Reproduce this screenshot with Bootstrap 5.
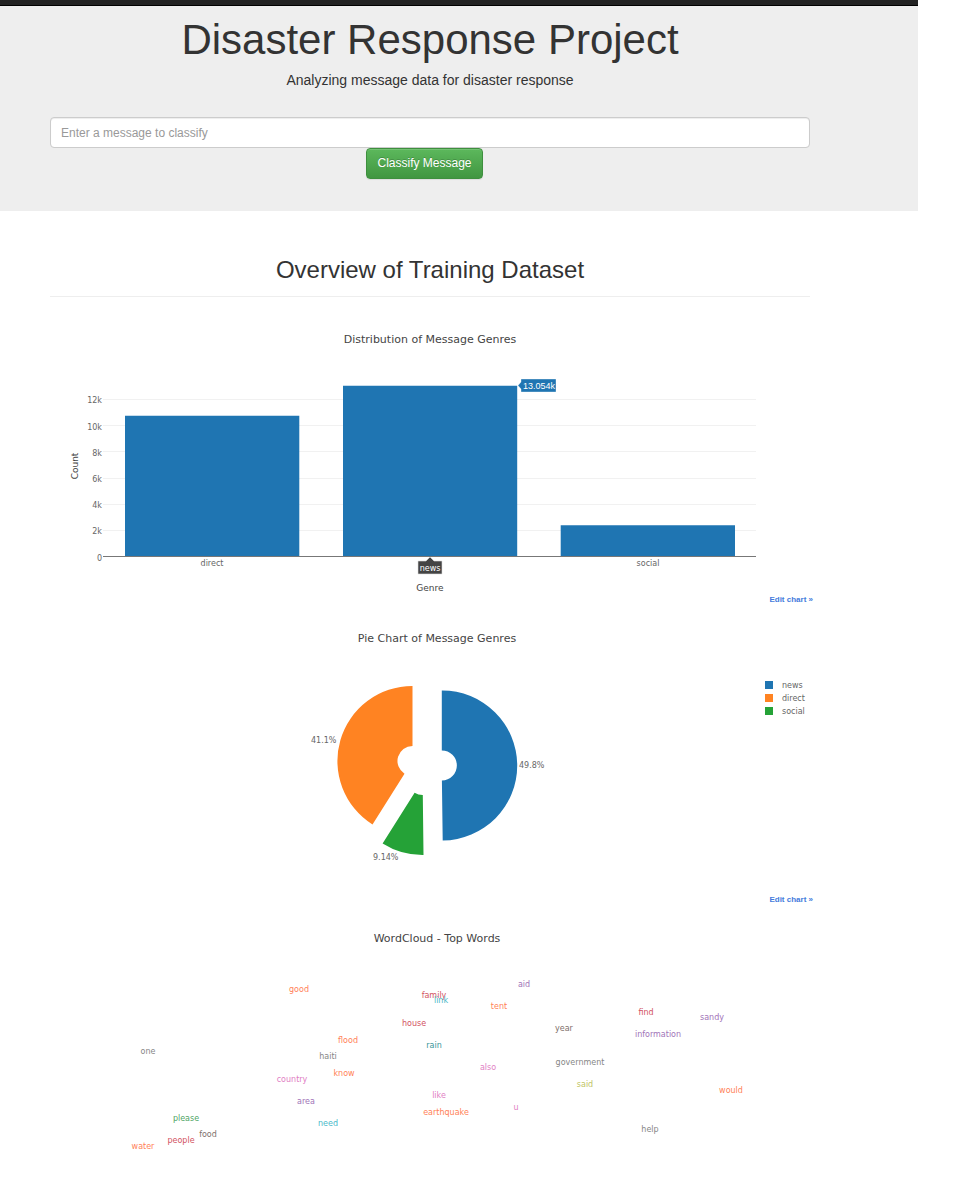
<!DOCTYPE html>
<html lang="en">
<head>
<meta charset="utf-8">
<meta name="viewport" content="width=device-width, initial-scale=1">
<title>Disasters</title>
<link rel="stylesheet" href="https://cdn.jsdelivr.net/npm/bootstrap@5.3.0/dist/css/bootstrap.min.css">
<style>
  body { font-family: "Liberation Sans", Arial, sans-serif; font-size: 12px; color: #333; background: #fff; padding-right: 35px; overflow-x: hidden; }
  .topbar { height: 6px; background: #222; border-bottom: 1px solid #000; }
  .inset { padding-left: 50px; padding-right: 108px; }
  .hero { background: #eee; padding-top: 11px; padding-bottom: 32px; }
  .hero h1 { font-size: 42px; line-height: 46px; font-weight: 400; margin: 0 0 7px; }
  .hero p { font-size: 14px; line-height: 20px; margin: 0 0 27px; }
  .msg-input { height: 31px; font-size: 12px; padding: 5px 10px; border: 1px solid #ccc; border-radius: 4px; box-shadow: inset 0 1px 1px rgba(0,0,0,.075); }
  .msg-input::placeholder { color: #999; }
  .btn-classify { height: 31px; font-size: 12px; line-height: 17px; padding: 5px 10px; margin-right: 11px; color: #fff; border: 1px solid #3e8f3e; border-radius: 4px; background: linear-gradient(#5cb85c, #419641); text-shadow: 0 -1px 0 rgba(0,0,0,.2); box-shadow: inset 0 1px 0 rgba(255,255,255,.15), 0 1px 1px rgba(0,0,0,.075); }
  .btn-classify:hover { color: #fff; background: #419641; }
  .section-title { margin-top: 44px; padding-bottom: 11px; border-bottom: 1px solid #eee; margin-bottom: 9px; }
  .section-title h2 { font-size: 24px; line-height: 30px; font-weight: 400; margin: 0; }
  .plot svg { display: block; width: 100%; height: auto; overflow: visible; font-family: "DejaVu Sans", Verdana, sans-serif; font-size: 8px; fill: #666; }
  .plot .plot-title { font-size: 11px; fill: #444; }
  .plot .axis-title { font-size: 9px; fill: #444; }
  .plot .tip { fill: #fff; }
  .plot .tip-num { fill: #fff; font-family: "Liberation Sans", Arial, sans-serif; font-size: 9px; }
  .edit-link { font-size: 8px; line-height: 12px; font-weight: 700; margin-right: -3px; }
  .edit-link a { color: #447bdc; text-decoration: none; }
  .c-blue { fill: #1f75b2; } .c-orange { fill: #ff8322; } .c-green { fill: #25a237; }
  .w-orange { fill: #ff7f57; } .w-red { fill: #d25362; } .w-purple { fill: #a173b8; } .w-pink { fill: #df80c4; }
  .w-gray { fill: #868686; } .w-brown { fill: #80706c; } .w-cyan { fill: #4ab9c9; } .w-green { fill: #4fa565; }
  .w-teal { fill: #389699; } .w-olive { fill: #c0c464; }
</style>
</head>
<body>
<nav class="topbar" aria-label="Main"></nav>

<header class="hero inset text-center">
  <h1>Disaster Response Project</h1>
  <p>Analyzing message data for disaster response</p>
  <form action="#" method="get">
    <input class="form-control msg-input" type="text" name="query" aria-label="Enter a message to classify" placeholder="Enter a message to classify">
    <div class="d-flex justify-content-center">
      <button type="submit" class="btn btn-classify">Classify Message</button>
    </div>
  </form>
</header>

<main class="inset">
  <div class="section-title text-center">
    <h2>Overview of Training Dataset</h2>
  </div>

  <section class="plot">
    <svg viewBox="0 0 760 288" role="img" aria-label="Distribution of Message Genres">
      <text class="plot-title" x="380" y="37" text-anchor="middle">Distribution of Message Genres</text>
      <path d="M53 93.5H706M53 119.5H706M53 145.5H706M53 172.5H706M53 198.5H706M53 224.5H706" stroke="#f1f1f1"/>
      <g class="c-blue">
        <path d="M75 109.700H249.300V250H75z"/>
        <path d="M293 79.700H467.200V250H293z"/>
        <path d="M510.700 219.300H685V250H510.700z"/>
      </g>
      <path d="M53 250.500H706" stroke="#777"/>
      <g text-anchor="end">
        <text x="52" y="97">12k</text>
        <text x="52" y="124">10k</text>
        <text x="52" y="150">8k</text>
        <text x="52" y="176">6k</text>
        <text x="52" y="202">4k</text>
        <text x="52" y="228">2k</text>
        <text x="52" y="255">0</text>
      </g>
      <g text-anchor="middle">
        <text x="162" y="260">direct</text>
        <text x="598" y="260">social</text>
        <text class="axis-title" x="380" y="285">Genre</text>
        <text class="axis-title" transform="translate(28 160) rotate(-90)">Count</text>
      </g>
      <path class="c-blue" d="M468 79.500L471 76V73H506V86H471V83z" stroke="#fff" stroke-opacity=".6" stroke-width=".6"/>
      <text class="tip-num" x="473" y="83">13.054k</text>
      <path d="M380 251L384 255H392V268H368V255H376z" fill="#444" stroke="#ddd" stroke-width=".6"/>
      <text class="tip" x="380" y="265" text-anchor="middle">news</text>
    </svg>
    <div class="edit-link text-end"><a href="#">Edit chart »</a></div>
  </section>

  <section class="plot">
    <svg viewBox="0 0 760 288" role="img" aria-label="Pie Chart of Message Genres">
      <text class="plot-title" x="387" y="36" text-anchor="middle">Pie Chart of Message Genres</text>
      <path class="c-blue" d="M391.800 84.500A75 75 0 0 1 392.700 234.500L391.900 174.500A15 15 0 0 0 391.800 144.500z"/>
      <path class="c-orange" d="M362.500 80A75 75 0 0 0 322.500 218.500L354.500 167.700A15 15 0 0 1 362.500 140z"/>
      <path class="c-green" d="M373.500 249A75 75 0 0 1 332.600 237.500L364.600 186.700A15 15 0 0 0 372.800 189z"/>
      <text x="261" y="137">41.1%</text>
      <text x="469" y="162">49.8%</text>
      <text x="323" y="254">9.14%</text>
      <rect class="c-blue" x="715" y="75" width="8" height="8"/>
      <rect class="c-orange" x="715" y="88" width="8" height="8"/>
      <rect class="c-green" x="715" y="101" width="8" height="8"/>
      <text x="732" y="82">news</text>
      <text x="732" y="95">direct</text>
      <text x="732" y="108">social</text>
    </svg>
    <div class="edit-link text-end"><a href="#">Edit chart »</a></div>
  </section>

  <section class="plot">
    <svg viewBox="0 0 760 285" role="img" aria-label="WordCloud - Top Words" text-anchor="middle">
      <text class="plot-title" x="387" y="36">WordCloud - Top Words</text>
      <text class="w-orange" x="249" y="86">good</text>
      <text class="w-orange" x="298" y="137">flood</text>
      <text class="w-gray" x="278" y="153">haiti</text>
      <text class="w-gray" x="98" y="148">one</text>
      <text class="w-orange" x="294" y="170">know</text>
      <text class="w-pink" x="242" y="176">country</text>
      <text class="w-purple" x="256" y="198">area</text>
      <text class="w-cyan" x="278" y="220">need</text>
      <text class="w-green" x="136" y="215">please</text>
      <text class="w-brown" x="158" y="231">food</text>
      <text class="w-red" x="131" y="237">people</text>
      <text class="w-orange" x="93" y="243">water</text>
      <text class="w-purple" x="474" y="81">aid</text>
      <text class="w-red" x="384" y="92">family</text>
      <text class="w-cyan" x="391" y="97">link</text>
      <text class="w-orange" x="449" y="103">tent</text>
      <text class="w-red" x="364" y="120">house</text>
      <text class="w-teal" x="384" y="142">rain</text>
      <text class="w-brown" x="514" y="125">year</text>
      <text class="w-gray" x="530" y="159">government</text>
      <text class="w-olive" x="535" y="181">said</text>
      <text class="w-pink" x="438" y="164">also</text>
      <text class="w-pink" x="389" y="192">like</text>
      <text class="w-orange" x="396" y="209">earthquake</text>
      <text class="w-pink" x="466" y="204">u</text>
      <text class="w-red" x="596" y="109">find</text>
      <text class="w-purple" x="662" y="114">sandy</text>
      <text class="w-purple" x="608" y="131">information</text>
      <text class="w-orange" x="681" y="187">would</text>
      <text class="w-gray" x="600" y="226">help</text>
    </svg>
  </section>
</main>
<script src="https://cdn.jsdelivr.net/npm/bootstrap@5.3.0/dist/js/bootstrap.bundle.min.js"></script>
</body>
</html>
